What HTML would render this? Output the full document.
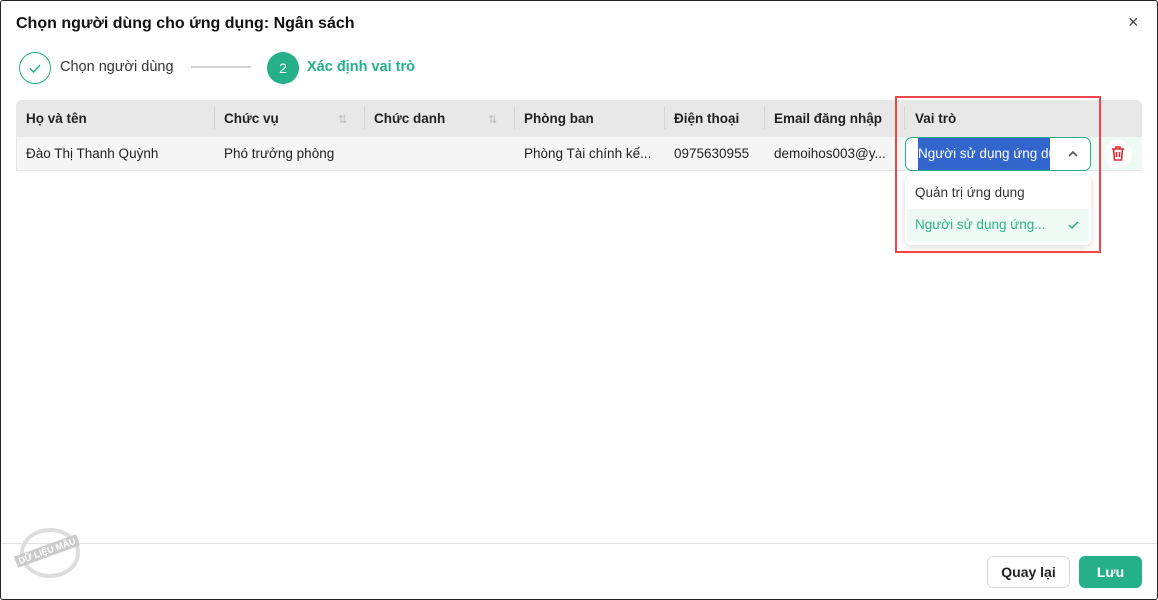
<!DOCTYPE html>
<html><head><meta charset="utf-8"><style>
*{box-sizing:border-box;margin:0;padding:0}
body{width:1158px;height:600px;overflow:hidden;background:#fff;font-family:"Liberation Sans",sans-serif;color:#222;position:relative}
.frame{position:absolute;left:0;top:0;width:1158px;height:600px;border:1px solid #222;border-radius:3px}
.abs{position:absolute;white-space:nowrap}
.th{position:absolute;top:100px;height:37px;line-height:37px;font-size:13.5px;font-weight:bold;color:#222;padding-left:10px}
.sep{position:absolute;top:107px;width:1px;height:22px;background:#d4d4d4}
.td{position:absolute;top:137px;height:34px;line-height:34px;font-size:13.5px;color:#222;padding-left:10px}
.sort{position:absolute;top:113px;font-size:11px;color:#bbb}
</style></head><body>
<div class="frame"></div>
<div class="abs" style="left:16px;top:15px;font-size:16px;font-weight:bold;color:#111">Chọn người dùng cho ứng dụng: Ngân sách</div>
<div class="abs" style="left:1128px;top:12px;font-size:18px;color:#444">×</div>
<div class="abs" style="left:19px;top:52px;width:32px;height:32px;border:1.5px solid #25b08a;border-radius:50%"></div>
<svg class="abs" style="left:19px;top:52px" width="32" height="32"><path d="M11 16.5l3.5 3.5 6.5-7" fill="none" stroke="#25b08a" stroke-width="1.5"/></svg>
<div class="abs" style="left:60px;top:59px;font-size:14.5px;color:#333">Chọn người dùng</div>
<div class="abs" style="left:191px;top:66px;width:60px;height:2px;background:#d0d0d0"></div>
<div class="abs" style="left:267px;top:52px;width:32px;height:32px;background:#25b08a;border-radius:50%;color:#fff;font-size:14px;text-align:center;line-height:32px">2</div>
<div class="abs" style="left:307px;top:59px;font-size:14.5px;font-weight:bold;color:#25b08a">Xác định vai trò</div>

<div class="abs" style="left:16px;top:100px;width:1126px;height:37px;background:#e8e8e8;border-radius:6px 6px 0 0"></div>
<div class="abs" style="left:16px;top:137px;width:1126px;height:34px;background:#f5f5f5;border:1px solid #e6e6e6;border-top:none"></div>
<div class="abs" style="left:904px;top:137px;width:238px;height:33px;background:#f0faf4"></div>
<div class="th" style="left:16px">Họ và tên</div>
<div class="sep" style="left:214px"></div><div class="th" style="left:214px">Chức vụ</div><div class="sort" style="left:338px">⇅</div>
<div class="sep" style="left:364px"></div><div class="th" style="left:364px">Chức danh</div><div class="sort" style="left:488px">⇅</div>
<div class="sep" style="left:514px"></div><div class="th" style="left:514px">Phòng ban</div>
<div class="sep" style="left:664px"></div><div class="th" style="left:664px">Điện thoại</div>
<div class="sep" style="left:764px"></div><div class="th" style="left:764px">Email đăng nhập</div>
<div class="sep" style="left:904px"></div><div class="th" style="left:905px">Vai trò</div>
<div class="td" style="left:16px">Đào Thị Thanh Quỳnh</div>
<div class="td" style="left:214px">Phó trưởng phòng</div>
<div class="td" style="left:514px">Phòng Tài chính kế...</div>
<div class="td" style="left:664px">0975630955</div>
<div class="td" style="left:764px">demoihos003@y...</div>
<div class="abs" style="left:905px;top:137px;width:186px;height:34px;border:1px solid #25b08a;border-radius:7px;background:#fff"></div>
<div class="abs" style="left:918px;top:138px;width:132px;height:32px;background:#3366cc;color:#fff;font-size:13.5px;line-height:32px;overflow:hidden">Người sử dụng ứng dụng</div>
<svg class="abs" style="left:1066px;top:148px" width="14" height="12"><path d="M3 8l4-4 4 4" fill="none" stroke="#555" stroke-width="1.6"/></svg>
<div class="abs" style="left:1104px;top:140px;width:28px;height:28px;background:#fff;border-radius:50%"></div>
<svg class="abs" style="left:1111px;top:146px" width="14" height="15"><path d="M1 3h12M5 3V1h4v2M2.5 3l1 11h7l1-11M5.5 6v5M8.5 6v5" fill="none" stroke="#e0282e" stroke-width="1.6"/></svg>

<div class="abs" style="left:905px;top:176px;width:186px;height:69px;background:#fff;border-radius:6px;box-shadow:0 2px 8px rgba(0,0,0,.15)"></div>
<div class="abs" style="left:915px;top:185px;font-size:13.5px;color:#333">Quản trị ứng dụng</div>
<div class="abs" style="left:907px;top:209px;width:182px;height:32px;background:#effaf4"></div>
<div class="abs" style="left:915px;top:217px;font-size:13.5px;color:#2bb58a">Người sử dụng ứng...</div>
<svg class="abs" style="left:1067px;top:218px" width="14" height="14"><path d="M2 7l3 3 6-6" fill="none" stroke="#25b08a" stroke-width="1.5"/></svg>
<div class="abs" style="left:895px;top:96px;width:206px;height:157px;border:2px solid #f0454a"></div>

<div class="abs" style="left:1px;top:543px;width:1156px;height:1px;background:#e4e4e4"></div>
<div class="abs" style="left:20px;top:528px;width:60px;height:50px;border:4px solid #ddd;border-radius:50%"></div>
<div class="abs" style="left:14px;top:545px;font-size:9px;font-weight:bold;color:#fff;background:#ccc;padding:1px 3px;transform:rotate(-20deg)">DỮ LIỆU MẪU</div>
<div class="abs" style="left:987px;top:556px;width:83px;height:32px;border:1px solid #d8d8d8;border-radius:6px;font-size:14px;font-weight:bold;text-align:center;line-height:30px;color:#222">Quay lại</div>
<div class="abs" style="left:1079px;top:556px;width:63px;height:32px;background:#25b08a;border-radius:6px;font-size:14px;font-weight:bold;text-align:center;line-height:32px;color:#fff">Lưu</div>
</body></html>
